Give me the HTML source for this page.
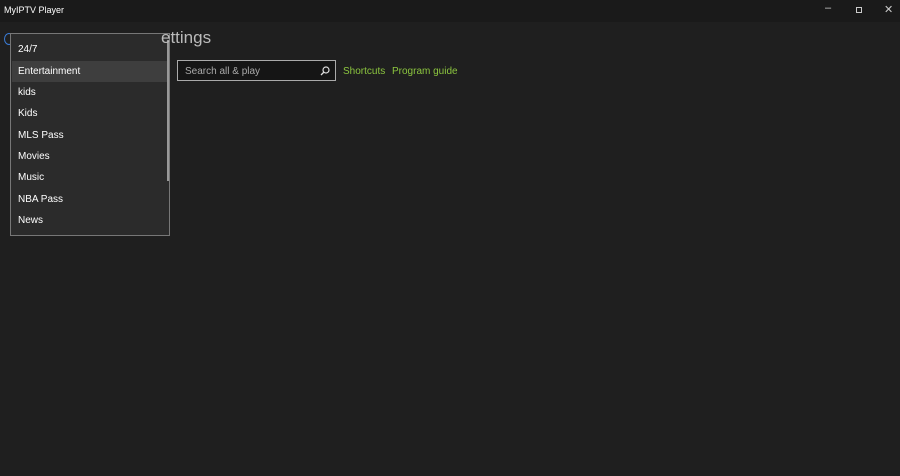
<!DOCTYPE html>
<html><head><style>
*{margin:0;padding:0;box-sizing:border-box}
body{width:900px;height:476px;background:#1f1f1f;font-family:"Liberation Sans",sans-serif;color:#fff;position:relative;overflow:hidden}
.tb{position:absolute;left:0;top:0;width:900px;height:22px;background:#1a1a1a}
.tb .t{position:absolute;left:4px;top:5px;font-size:9px;color:#fff}
.w{position:absolute;top:4px;font-size:11px;color:#ccc}
.hdr{position:absolute;top:28px;font-size:17px;color:#bbb;z-index:3}
.circ{position:absolute;left:4px;top:33px;width:10px;height:12px;border:1.5px solid #3a7bd5;border-radius:50%}
.search{position:absolute;left:177px;top:60px;width:159px;height:21px;border:1px solid #aaa;background:#151515;font-size:10px;color:#aaa;padding:5px 0 0 7px}
.link{position:absolute;top:66px;font-size:10px;color:#8cc63f}
.dd{position:absolute;left:10px;top:33px;width:160px;height:203px;background:#2b2b2b;border:1px solid #777;z-index:2}
.it{position:absolute;left:7px;font-size:10px;color:#fff}
.hl{position:absolute;left:1px;top:27px;width:155px;height:21px;background:#3e3e3e}
.sb{position:absolute;left:156px;top:6px;width:2px;height:141px;background:#999}
</style></head><body>
<div class="tb"><div class="t">MyIPTV Player</div>
<div class="w" style="left:825px;top:2px">–</div>
<div style="position:absolute;left:856px;top:7px;width:6px;height:6px;border:1px solid #ccc"></div>
<div class="w" style="left:884px;top:3px">✕</div></div>
<div class="circ"></div>
<div class="hdr" style="left:161px">ettings</div>
<div class="search">Search all &amp; play
<svg style="position:absolute;right:5px;top:5px" width="10" height="10" viewBox="0 0 10 10"><circle cx="6" cy="4" r="3" fill="none" stroke="#ddd" stroke-width="1.2"/><line x1="4" y1="6" x2="1" y2="9" stroke="#ddd" stroke-width="1.3"/></svg></div>
<div class="link" style="left:343px">Shortcuts</div>
<div class="link" style="left:392px">Program guide</div>
<div class="dd">
<div class="hl"></div>
<div class="sb"></div>
<div class="it" style="top:10px">24/7</div>
<div class="it" style="top:32px">Entertainment</div>
<div class="it" style="top:53px">kids</div>
<div class="it" style="top:74px">Kids</div>
<div class="it" style="top:96px">MLS Pass</div>
<div class="it" style="top:117px">Movies</div>
<div class="it" style="top:138px">Music</div>
<div class="it" style="top:160px">NBA Pass</div>
<div class="it" style="top:181px">News</div>
</div>
</body></html>
